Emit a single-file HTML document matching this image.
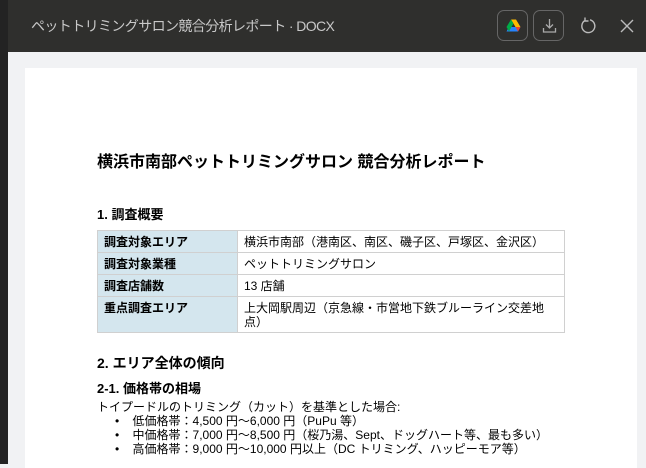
<!DOCTYPE html>
<html><head><meta charset="utf-8"><style>
*{margin:0;padding:0;box-sizing:border-box}
body{width:646px;height:464px;overflow:hidden;background:#f1f2f4;font-family:"Liberation Sans","Noto Sans CJK JP",sans-serif;position:relative}
.left{position:absolute;left:0;top:0;width:8px;height:464px;background:#232323}
.bar{position:absolute;left:8px;top:0;right:0;height:52px;background:#2f2f2d}
.ttl{position:absolute;left:23px;top:16px;color:#c8c8c8;font-size:14px;letter-spacing:-0.6px}
.btn{position:absolute;top:10px;width:31px;height:31px;border:1px solid #666;border-radius:7px}
.page{position:absolute;left:25px;top:68px;width:612px;height:400px;background:#fff;color:#000}
.a{position:absolute;white-space:nowrap}
table{position:absolute;left:72px;top:162px;width:468px;border-collapse:collapse;font-size:12px}
td{border:1px solid #d0d0d0;padding:4px 6px 3px;vertical-align:top;line-height:14px}
td.h{background:#d4e6ee;font-weight:bold;width:140px}
</style></head><body>
<div class="left"></div>
<div class="bar">
<div class="ttl">ペットトリミングサロン競合分析レポート · DOCX</div>
<div class="btn" style="left:489px"><svg width="31" height="31" viewBox="0 0 31 31"><polygon points="13,8.5 18,8.5 22.5,16 17.5,16" fill="#ffba00"/><polygon points="8.5,20.5 11,16 22.5,16 20,20.5" fill="#2684fc"/><polygon points="13,8.5 8.5,16 11,20.5 15.5,12.5" fill="#00ac47"/><polygon points="22.5,16 20,20.5 17.5,16" fill="#ea4335"/></svg></div>
<div class="btn" style="left:525px"><svg width="31" height="31" viewBox="0 0 31 31" fill="none" stroke="#aaa" stroke-width="1.3"><path d="M15.5 8v9M12 13.5l3.5 3.5 3.5-3.5M9.5 17v4h12v-4"/></svg></div>
<svg style="position:absolute;left:569px;top:15px" width="22" height="22" viewBox="0 0 22 22" fill="none" stroke="#bbb" stroke-width="1.4"><path d="M8 5.5A6.5 6.5 0 1 0 13 4.8M8 2.5v3.5h3.5"/></svg>
<svg style="position:absolute;left:611px;top:18px" width="16" height="16" viewBox="0 0 16 16" stroke="#bbb" stroke-width="1.4"><path d="M2 2l12 12M14 2L2 14"/></svg>
</div>
<div class="page">
<div class="a" style="left:72px;top:80px;font-size:16px;font-weight:bold">横浜市南部ペットトリミングサロン 競合分析レポート</div>
<div class="a" style="left:72px;top:136px;font-size:13px;font-weight:bold">1. 調査概要</div>
<table>
<tr><td class="h">調査対象エリア</td><td>横浜市南部（港南区、南区、磯子区、戸塚区、金沢区）</td></tr>
<tr><td class="h">調査対象業種</td><td>ペットトリミングサロン</td></tr>
<tr><td class="h">調査店舗数</td><td>13 店舗</td></tr>
<tr><td class="h" style="height:35px">重点調査エリア</td><td>上大岡駅周辺（京急線・市営地下鉄ブルーライン交差地<br>点）</td></tr>
</table>
<div class="a" style="left:72px;top:285px;font-size:14px;font-weight:bold">2. エリア全体の傾向</div>
<div class="a" style="left:72px;top:310px;font-size:13px;font-weight:bold">2-1. 価格帯の相場</div>
<div class="a" style="left:72px;top:332px;font-size:12px;line-height:14px">トイプードルのトリミング（カット）を基準とした場合:<br>
<span style="padding-left:18px">•&nbsp;&nbsp;&nbsp;&nbsp;低価格帯：4,500 円〜6,000 円（PuPu 等）</span><br>
<span style="padding-left:18px">•&nbsp;&nbsp;&nbsp;&nbsp;中価格帯：7,000 円〜8,500 円（桜乃湯、Sept、ドッグハート等、最も多い）</span><br>
<span style="padding-left:18px">•&nbsp;&nbsp;&nbsp;&nbsp;高価格帯：9,000 円〜10,000 円以上（DC トリミング、ハッピーモア等）</span></div>
</div>
</body></html>
